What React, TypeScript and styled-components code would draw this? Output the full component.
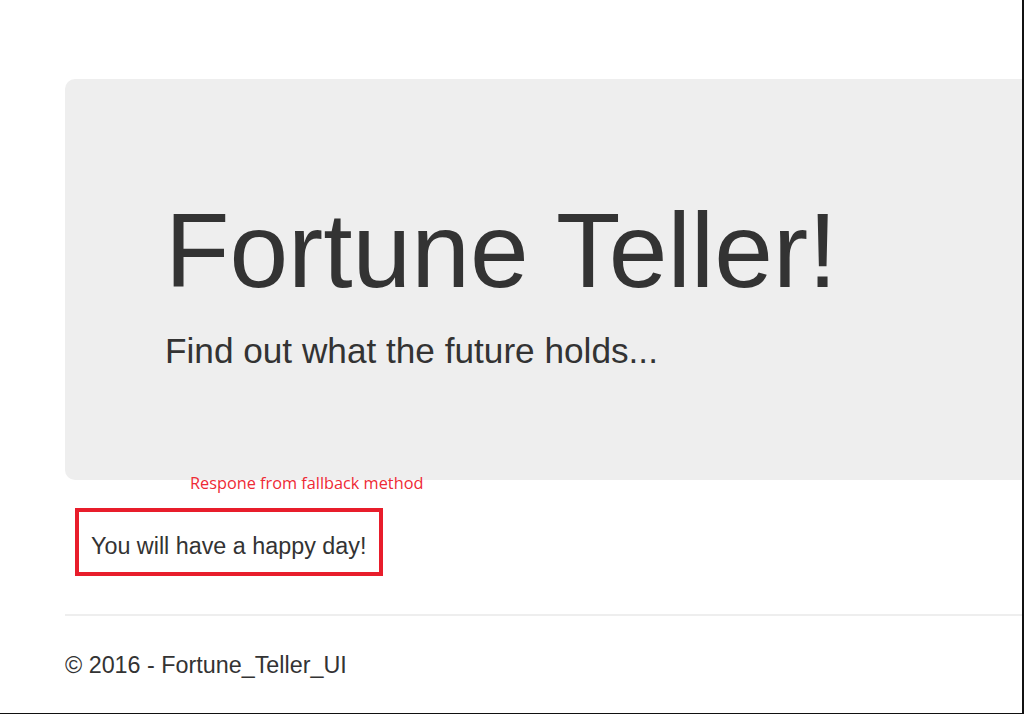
import React from "react";
import styled, { createGlobalStyle } from "styled-components";

const GlobalStyle = createGlobalStyle`
  html, body {
    margin: 0;
    padding: 0;
    background: #ffffff;
  }
  body {
    font-family: "Liberation Sans", Arial, Helvetica, sans-serif;
    color: #333333;
  }
`;

const Frame = styled.div`
  width: 1024px;
  height: 714px;
  box-sizing: border-box;
  border-right: 2px solid #111111;
  border-bottom: 1px solid #111111;
  overflow: hidden;
  background: #ffffff;
`;

const Container = styled.div`
  padding: 79px 0 0 65px;
  margin-right: -30px;
`;

const Jumbotron = styled.section`
  height: 401px;
  box-sizing: border-box;
  padding: 119px 0 0 100px;
  background: #eeeeee;
  border-radius: 10px;
`;

const Title = styled.h1`
  margin: 0;
  font-family: "Liberation Sans", Arial, sans-serif;
  font-size: 105.5px;
  line-height: 105px;
  font-weight: 400;
  color: #333333;
`;

const Lead = styled.p`
  margin: 23px 0 0;
  font-size: 35.2px;
  line-height: 49px;
  font-weight: 400;
  color: #333333;
`;

const ResponseArea = styled.div`
  position: relative;
  padding-top: 28px;
`;

const Annotation = styled.span`
  position: absolute;
  top: -5px;
  left: 125px;
  font-family: "Open Sans", "Noto Sans", sans-serif;
  font-size: 16.3px;
  line-height: 16.3px;
  color: #ee2a35;
  white-space: nowrap;
`;

const ResponseBox = styled.div`
  margin-left: 10px;
  width: 308px;
  box-sizing: border-box;
  border: 4px solid #e81d2b;
  padding: 18px 12px 9px;
  font-size: 23.33px;
  line-height: 33.3px;
  color: #333333;
`;

const Rule = styled.hr`
  margin: 38px 0 0;
  border: 0;
  border-top: 2px solid #eeeeee;
`;

const Footer = styled.footer`
  padding-top: 33px;
  font-size: 23.33px;
  line-height: 33.3px;
  color: #333333;
`;

export default function App() {
  return (
    <>
      <GlobalStyle />
      <Frame>
        <Container>
          <Jumbotron>
            <Title>Fortune Teller!</Title>
            <Lead>Find out what the future holds...</Lead>
          </Jumbotron>
          <ResponseArea>
            <Annotation>Respone from fallback method</Annotation>
            <ResponseBox>You will have a happy day!</ResponseBox>
          </ResponseArea>
          <Rule />
          <Footer>© 2016 - Fortune_Teller_UI</Footer>
        </Container>
      </Frame>
    </>
  );
}
